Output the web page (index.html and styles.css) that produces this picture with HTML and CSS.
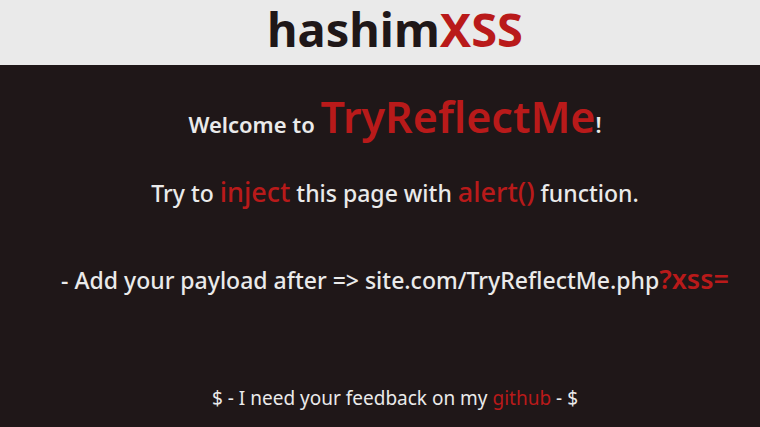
FILE: index.html
```html
<!DOCTYPE html>
<html lang="en">
<head>
<meta charset="utf-8">
<meta name="viewport" content="width=device-width, initial-scale=1">
<title>hashimXSS</title>
<link rel="stylesheet" href="styles.css">
</head>
<body>
<header class="banner"><h1 class="brand">hashim<span class="accent">XSS</span></h1></header>
<main class="content">
<p class="line welcome">Welcome to <span class="accent site">TryReflectMe</span>!</p>
<p class="line task">Try to <span class="accent key">inject</span> this page with <span class="accent key">alert()</span> function.</p>
<p class="line hint">- Add your payload after =&gt; site.com/TryReflectMe.php<span class="accent param">?xss=</span></p>
</main>
<footer class="footer">$ - I need your feedback on my <a class="accent" href="https://github.com/">github</a> - $</footer>
</body>
</html>
```
FILE: styles.css
```css
* { box-sizing: border-box; }
body {
  margin: 0;
  min-height: 100vh;
  display: flex;
  flex-direction: column;
  background: #1f1718;
  color: #eaeaea;
  font-family: "Noto Sans", "Open Sans", sans-serif;
  text-align: center;
}
.accent { color: #b91a1a; text-decoration: none; }
.banner { background: #eaeaea; color: #1f1718; padding-left: 30px; }
.brand { margin: 0; font-size: 47px; line-height: 58px; padding-bottom: 7px; font-weight: 700; }
.content { flex: 1; padding-left: 30px; }
.line { margin: 0; font-size: 22px; font-weight: 600; white-space: nowrap; }
.welcome { padding-top: 16px; line-height: 72px; }
.site { font-size: 43px; }
.task, .hint { font-size: 23px; font-weight: 500; }
.task { padding-top: 8px; line-height: 48px; }
.key, .param { font-size: 27px; }
.hint { padding-top: 38px; line-height: 48px; }
.param { font-weight: 600; }
.footer { padding: 0 0 16px 30px; font-size: 19px; line-height: 26px; }
```
